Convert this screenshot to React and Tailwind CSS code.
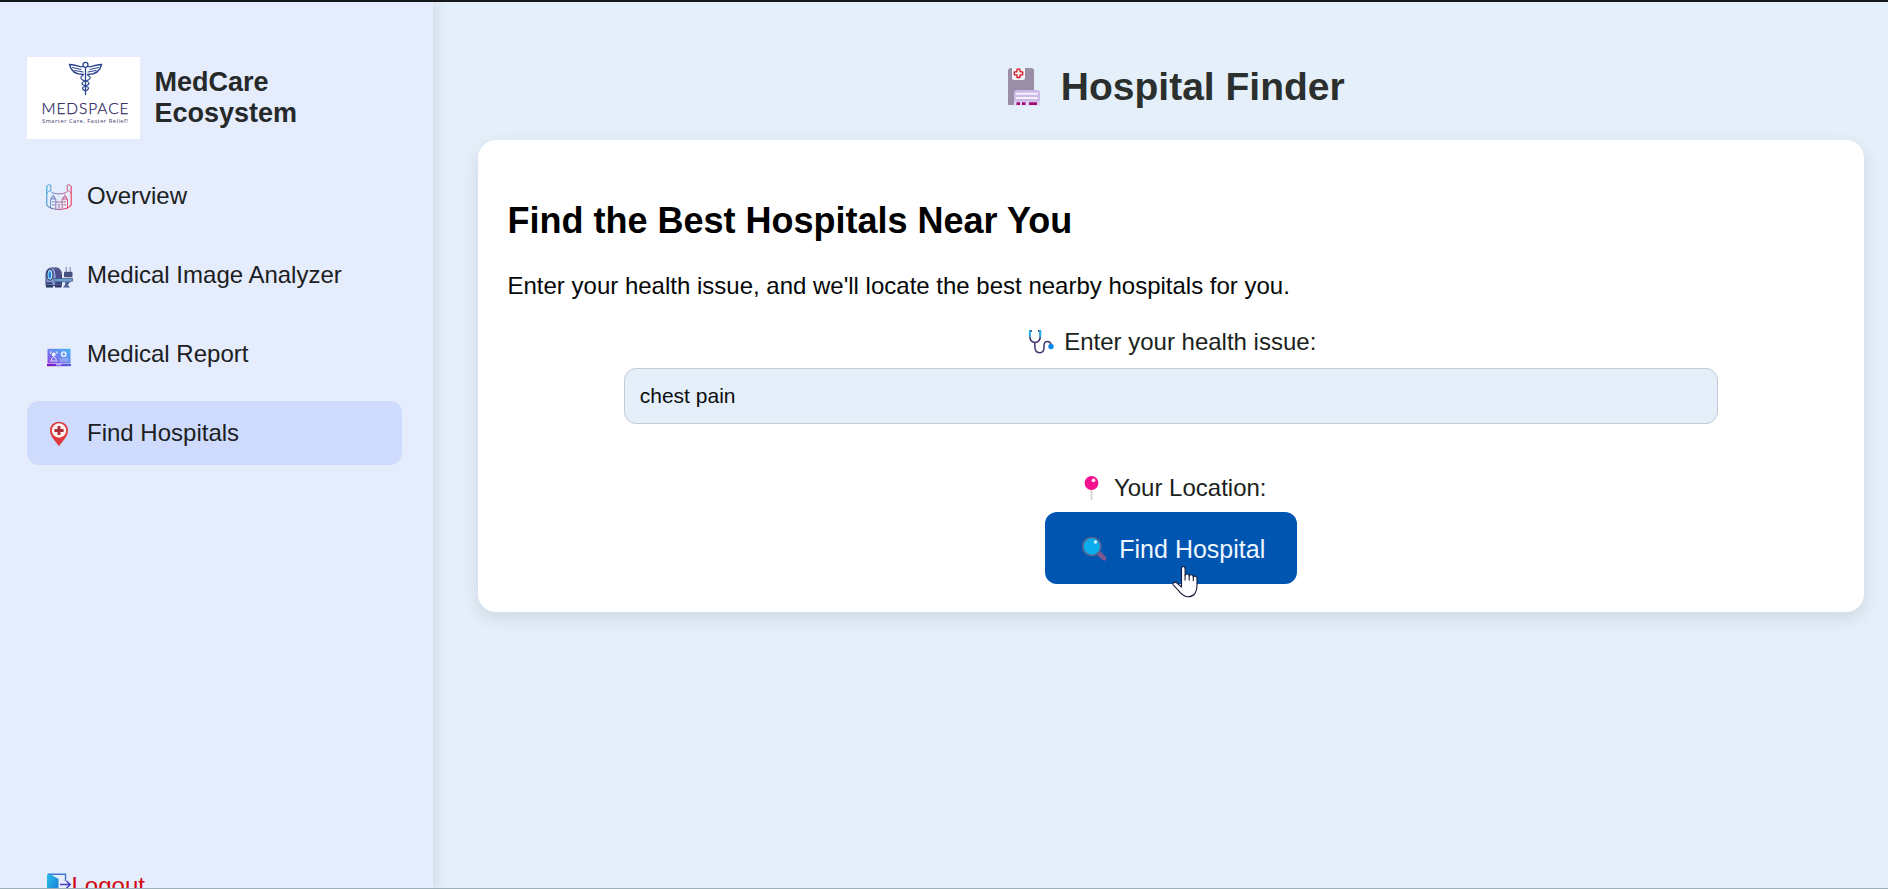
function Logo() {
  return (
    <svg className="h-[82px] w-[113px] shrink-0 bg-[#fefffe]" viewBox="0 0 113 82" fill="none">
      <g stroke="#2c4590" strokeWidth="1" strokeLinecap="round">
        <path d="M58.500 11V37.500" strokeWidth="1.300" />
        <circle cx="58.500" cy="7.800" r="2.500" strokeWidth="1.300" />
        <path d="M56 9.500C53.500 11 51 8 42.500 7.500C43.500 12.500 47.500 17.500 56.500 17.500M61 9.500C63.500 11 66 8 74.500 7.500C73.500 12.500 69.500 17.500 60.500 17.500" strokeWidth="1.300" />
        <path d="M45.500 10.500L54 12.500M48 13.500L56 15M71.500 10.500L63 12.500M69 13.500L61 15" />
        <path d="M56 18.500C52 20 54 23 58.500 24S63.500 27.500 58.500 29S55.500 32.500 58.500 34M61 18.500C65 20 63 23 58.500 24S53.500 27.500 58.500 29S61.500 32.500 58.500 34" strokeWidth="1.100" />
      </g>
      <text x="14.500" y="56.600" fontFamily="Lato, sans-serif" fontWeight="300" fontSize="15.500" fill="#2d1f63" stroke="#2d1f63" strokeWidth=".25" textLength="87">MEDSPACE</text>
      <text x="15" y="66" fontFamily="Open Sans, sans-serif" fontSize="5.600" fontWeight="500" fill="#45356b" textLength="86">Smarter Care, Faster Relief!</text>
    </svg>
  );
}

function OverviewIcon() {
  return (
    <svg className="h-[26px] w-[26px]" viewBox="0 0 26 26" fill="none" stroke="url(#ov)" strokeWidth=".9">
      <defs>
        <linearGradient id="ov" gradientUnits="userSpaceOnUse" x1="0" y1="0" x2="26" y2="6">
          <stop offset="0" stopColor="#22b4ee" />
          <stop offset=".5" stopColor="#7868aa" />
          <stop offset="1" stopColor="#ee3a5c" />
        </linearGradient>
      </defs>
      <path d="M.8 2V21C3 24.500 8 25.400 13 25.400S23 24.500 25.200 21V2" strokeWidth="1.100" />
      <path d="M.8 2C2 .6 4 .6 4.800 1.200V6.500C3 7 1.500 8 .8 9.500M25.200 2C24 .6 22 .6 21.200 1.200V6.500C23 7 24.500 8 25.200 9.500" />
      <path d="M4.800 7.500C8 10.700 18 10.700 21.200 7.500" />
      <path d="M4.500 24V15H9.800V25M5.500 15V13H8.800V15M7.200 13V10.500M9.800 18H16.200V25M16.200 18V15H21.500V24M17.200 15V13H20.500V15M18.800 13V10.500" />
      <path d="M6 17.800H8.500M6 20.800H8.500M11.500 20.800H14.500M12 23H14M17.500 17.800H20M17.500 20.800H20" />
    </svg>
  );
}

function ScannerIcon() {
  return (
    <svg className="h-[22px] w-[28px]" viewBox="0 1 28 22.500" preserveAspectRatio="none" fill="none">
      <path d="M1 21V10Q1 3 7 3H12Q16.500 4 16.500 10V21Z" fill="#8a9bd3" stroke="#26335f" strokeWidth=".9" />
      <path d="M9 3.500H12Q16 5 16 10V20H10Q12 11 9 3.500Z" fill="#4c4f8c" />
      <ellipse cx="5" cy="10" rx="3" ry="5.500" fill="#b6e2ff" stroke="#253768" strokeWidth="1.100" />
      <ellipse cx="4.800" cy="10" rx="1.300" ry="3.700" fill="#1f86dc" />
      <path d="M1 17.500H7.500V20H1ZM10 17.500H16V20H10Z" fill="#3a4479" />
      <path d="M8.500 13.800H28V16.200L24 17.200H10Z" fill="#6ea0d0" stroke="#35507f" strokeWidth=".7" />
      <path d="M20.500 17.200H25L22.800 20.500L25 23H18L20 20.500Z" fill="#4b5f93" />
      <rect x="19" y="7" width="8.500" height="5.500" rx="1" fill="#464f7d" />
      <path d="M21.200 2V7M25.200 2V7" stroke="#6670a0" strokeWidth=".9" />
      <path d="M1 22H8M10 22H16.500" stroke="#27345e" strokeWidth="1.800" />
    </svg>
  );
}

function ReportIcon() {
  return (
    <svg className="h-[19px] w-[26px]" viewBox="0 0 26 19" fill="none">
      <defs>
        <linearGradient id="rp" x1="1" y1="0" x2="0" y2="1">
          <stop offset="0" stopColor="#45b4f4" />
          <stop offset=".5" stopColor="#6a86ee" />
          <stop offset="1" stopColor="#9a42e2" />
        </linearGradient>
        <linearGradient id="rb" x1="0" x2="1">
          <stop offset="0" stopColor="#7d0cc2" />
          <stop offset="1" stopColor="#5868e6" />
        </linearGradient>
      </defs>
      <path d="M1.500 .8H24.500V15.500H1.500Z" fill="url(#rp)" />
      <path d="M1 16H25V18.200H1Z" fill="url(#rb)" />
      <path d="M10 16.800H15.500" stroke="#dbe2ff" />
      <path d="M4 4H6M9.500 4H11.500M4 13H11.500M4.500 4V6M11 4V6M5.500 12.500V10.500L7.700 9L10 10.500V12.500" stroke="#e4eaff" strokeWidth=".9" />
      <circle cx="7.700" cy="6.500" r="1.900" fill="#eef2ff" />
      <circle cx="17.800" cy="6.200" r="2.900" fill="#e6f2ff" />
      <path d="M17.800 4.700V7.700M16.300 6.200H19.300" stroke="#4789e8" />
      <path d="M13.500 11H22.500M13.500 13H22.500" stroke="#bdd2fb" strokeWidth=".8" />
    </svg>
  );
}

function MapPinIcon() {
  return (
    <svg className="h-[26px] w-[20px]" viewBox="0 0 20 26" fill="none">
      <path d="M10 .7C4.800.7 1 4.500 1 9.500C1 15.500 6.500 20 10 25.300C13.500 20 19 15.500 19 9.500C19 4.500 15.200.7 10 .7Z" fill="#df3a3e" />
      <circle cx="10" cy="9.500" r="7.200" fill="#fff4f0" />
      <path d="M10 4.900V14.100M5.400 9.500H14.600" stroke="#ad2c3a" strokeWidth="2.900" />
    </svg>
  );
}

function LogoutIcon() {
  return (
    <svg className="h-[26px] w-[26px] shrink-0" viewBox="0 0 26 26" fill="none">
      <defs>
        <linearGradient id="lo" x1="0" y1="0" x2="1" y2="1">
          <stop offset="0" stopColor="#27c0ec" />
          <stop offset="1" stopColor="#1b6fcd" />
        </linearGradient>
      </defs>
      <path d="M2 1.300H19.500V8M19.500 15V21H13" stroke="#3f79cf" strokeWidth="1.400" />
      <path d="M1 1.300L6 2.200L12.500 6V25L1 21Z" fill="url(#lo)" />
      <path d="M14 11.500H24M20.500 8L24.200 11.500L20.500 15" stroke="#4a3cc4" strokeWidth="1.500" />
    </svg>
  );
}

function HospitalIcon() {
  return (
    <svg className="relative left-[1px] h-[38px] w-[53px] shrink-0" viewBox="0 0 53 38" fill="none">
      <path d="M10 3Q10 0 13 0H33Q36 0 36 3V37H10Z" fill="#998ea5" />
      <path d="M14 0H27V10Q27 12 25 12H16Q14 12 14 10Z" fill="#f4f2f8" />
      <path d="M19 1.200H22V3.800H24.700V6.800H22V9.500H19V6.800H16.300V3.800H19Z" fill="#fff" stroke="#d5121e" strokeWidth="1.300" strokeLinejoin="round" />
      <path d="M16 25Q16 22 19 22H39Q42 22 42 25V37H16Z" fill="#cbb9e6" />
      <path d="M18.500 25.800H39M18.500 30H39" stroke="#f6f1fc" strokeWidth="2" strokeLinecap="round" />
      <path d="M16 33.500H42V37.500H16Z" fill="#e2d5ef" />
      <path d="M18.500 35.600H22M24 35.600H27.500M31 35.600H39" stroke="#a40b79" strokeWidth="2.800" />
    </svg>
  );
}

function StethoscopeIcon() {
  return (
    <svg className="h-[26px] w-[33px] shrink-0" viewBox="0 0 33 26" fill="none">
      <path d="M9.800 13.500V17Q9.800 23.700 14.700 23.700Q19 23.700 19 18.500V16.500Q19 12.500 22.300 12.500Q25.700 12.500 26.200 16" stroke="#43356f" strokeWidth="1.500" />
      <path d="M7 1.900H4.800V7Q4.800 13.500 10 13.500Q15.300 13.500 15.300 7V1.900H13" stroke="#43356f" strokeWidth="1.600" />
      <path d="M6 1.900H4.800V8M14 1.900H15.300V8" stroke="#20b0ec" strokeWidth="1.800" />
      <circle cx="26" cy="17.500" r="2.700" fill="#0788ea" />
    </svg>
  );
}

function PushPinIcon() {
  return (
    <svg className="h-[26px] w-[33px] shrink-0" viewBox="0 0 33 26" fill="none">
      <path d="M16.500 14V25" stroke="#d3d3d6" strokeWidth="1.700" />
      <circle cx="16.500" cy="8" r="6.900" fill="#f5108f" />
      <circle cx="18.500" cy="5.300" r="1.900" fill="#ffe5f4" />
    </svg>
  );
}

function MagnifierIcon() {
  return (
    <svg className="h-[26px] w-[35px] shrink-0" viewBox="0 0 35 26" fill="none">
      <path d="M23.500 18L28 22.300" stroke="#7d568b" strokeWidth="4.800" strokeLinecap="round" />
      <circle cx="15.800" cy="10.500" r="9" fill="#0cadef" stroke="#56658f" strokeWidth="1.600" />
      <circle cx="19.500" cy="6" r="1.700" fill="#d5f5ff" />
    </svg>
  );
}

function HandCursor() {
  return (
    <svg className="absolute left-[127px] top-[53px] h-[34px] w-[28px]" viewBox="0 0 28 34" fill="#fdfdff" stroke="#17183a" strokeWidth="1.100" strokeLinejoin="round">
      <path d="M9.500 21V4Q9.500 1.500 11.300 1.500T13.100 4V10.500Q13.500 9 15.300 9T17.200 11Q18 9.600 19.500 9.800T21.300 12Q22 10.800 23.500 11.200T25 13.500V21C25 27 22 31.800 16.500 31.800C11.500 31.800 8.500 28 6 25L1.200 19.800Q.5 18.300 1.800 17.500Q3.500 16.800 5 18L9.500 22Z" />
      <path d="M13.100 10.500V15.500M17.200 11V15.500M21.300 12V16" fill="none" />
    </svg>
  );
}

const items = [
  { label: "Overview", Icon: OverviewIcon, offset: "pt-px" },
  { label: "Medical Image Analyzer", Icon: ScannerIcon, offset: "pt-[3px]" },
  { label: "Medical Report", Icon: ReportIcon, offset: "pt-[7px]" },
  { label: "Find Hospitals", Icon: MapPinIcon, offset: "pt-px", active: true },
];

function Sidebar() {
  return (
    <aside className="relative z-10 flex h-full w-[433px] shrink-0 flex-col bg-[#e5ecfc] pt-[55px] pr-[31px] pl-[27px] shadow-[3px_0_12px_rgba(0,0,0,0.1)]">
      <div className="flex h-[82px] items-center gap-[14.500px]">
        <Logo />
        <h2 className="text-[27px] leading-[31px] font-bold text-[#252929]">
          MedCare
          <br />
          Ecosystem
        </h2>
      </div>
      <nav className="mt-[25px] flex flex-col gap-[15px]">
        {items.map(({ label, Icon, active, offset }) => (
          <a
            key={label}
            className={`flex h-16 items-center rounded-xl pl-[18px] ${active ? "bg-[#cfdbfd]" : ""}`}
          >
            <span className={`flex w-7 justify-center ${offset}`}>
              <Icon />
            </span>
            <span className="ml-[14px] text-2xl leading-8 text-[#1b2022]">{label}</span>
          </a>
        ))}
      </nav>
      <a className="mt-auto -mb-[13px] flex h-[31px] shrink-0 items-center pl-[18.500px] text-2xl leading-[31px] text-[#d30812]">
        <LogoutIcon />
        <span>Logout</span>
      </a>
    </aside>
  );
}

export default function App() {
  return (
    <div className="flex h-[889px] w-[1888px] flex-col overflow-hidden border-t-2 border-b border-t-[#15181a] border-b-[#9fb0b8] bg-[#e4effa] font-['Liberation_Sans',Arial,sans-serif]">
      <div className="flex min-h-0 flex-1">
        <Sidebar />
        <main className="flex flex-1 flex-col pt-[62px] pr-6 pl-[44.500px]">
          <h1 className="flex h-[45px] items-center justify-center gap-[11px] text-[39px] leading-[45px] font-bold text-[#2b2f2e]">
            <HospitalIcon />
            <span>Hospital Finder</span>
          </h1>
          <section className="mt-[31px] flex h-[472px] flex-col rounded-[18px] bg-[#fefffe] px-[30px] pt-[60px] shadow-[0_6px_18px_rgba(0,0,0,0.1)]">
            <h2 className="text-4xl leading-[41px] font-bold text-black">Find the Best Hospitals Near You</h2>
            <p className="mt-[31px] text-2xl leading-7 text-[#060708]">
              Enter your health issue, and we'll locate the best nearby hospitals for you.
            </p>
            <div className="mt-7 flex h-7 items-center justify-center gap-[6px] text-2xl leading-7 text-[#1c1f20]">
              <StethoscopeIcon />
              <label htmlFor="issue">Enter your health issue:</label>
            </div>
            <input
              id="issue"
              defaultValue="chest pain"
              className="mt-3 h-14 w-[1094px] self-center rounded-xl border border-[#c5cad3] bg-[#e5effa] px-[15px] text-[21px] text-[#0b0d0f] outline-none"
            />
            <div className="mt-[50px] flex h-7 items-center justify-center gap-[6px] text-2xl leading-7 text-[#1c1f20]">
              <PushPinIcon />
              <span>Your Location:</span>
            </div>
            <button className="relative mt-[10px] flex h-[72px] w-[252px] items-center justify-center gap-2 self-center rounded-xl bg-[#0055b1] pt-px text-[25px] leading-8 text-[#eef7ff]">
              <MagnifierIcon />
              <span>Find Hospital</span>
              <HandCursor />
            </button>
          </section>
        </main>
      </div>
    </div>
  );
}
